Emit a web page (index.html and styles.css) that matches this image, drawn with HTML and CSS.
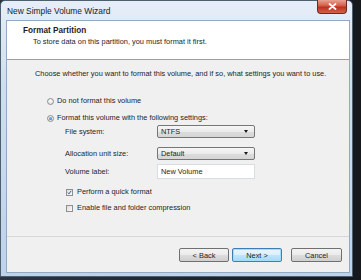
FILE: index.html
```html
<!DOCTYPE html>
<html>
<head>
<meta charset="utf-8">
<link rel="stylesheet" href="styles.css">
</head>
<body>
<div class="window">
  <div class="titlebar">
    <span class="title">New Simple Volume Wizard</span>
    <div class="close"><svg width="9" height="7" viewBox="0 0 9 7"><path d="M1.5 1 L7.5 6 M7.5 1 L1.5 6" stroke="#fff" stroke-width="1.8" stroke-linecap="round"/></svg></div>
  </div>
  <div class="client">
    <div class="header">
      <div class="h-title">Format Partition</div>
      <div class="h-sub">To store data on this partition, you must format it first.</div>
    </div>
    <div class="main">
      <div class="intro">Choose whether you want to format this volume, and if so, what settings you want to use.</div>
      <div class="radio-row r1"><span class="radio"></span>Do not format this volume</div>
      <div class="radio-row r2"><span class="radio checked"></span>Format this volume with the following settings:</div>
      <div class="field f-fs"><span class="label">File system:</span><div class="select">NTFS<span class="arrow"></span></div></div>
      <div class="field f-alloc"><span class="label">Allocation unit size:</span><div class="select">Default<span class="arrow"></span></div></div>
      <div class="field f-vol"><span class="label">Volume label:</span><div class="input">New Volume</div></div>
      <div class="check-row c1"><span class="check checked"><svg width="7" height="7" viewBox="0 0 7 7"><path d="M1.2 3.6 L2.8 5.4 L5.8 1.2" fill="none" stroke="#2a3f7a" stroke-width="1.2"/></svg></span>Perform a quick format</div>
      <div class="check-row c2"><span class="check"></span>Enable file and folder compression</div>
    </div>
    <div class="footer">
      <div class="btn">&lt; Back</div>
      <div class="btn default">Next &gt;</div>
      <div class="btn cancel">Cancel</div>
    </div>
  </div>
</div>
</body>
</html>
```

FILE: styles.css
```css
html, body { margin: 0; padding: 0; }
body {
  width: 361px; height: 280px; overflow: hidden;
  background: linear-gradient(90deg, #2c3440 0%, #15181c 100%);
  font-family: "Liberation Sans", Arial, sans-serif;
  color: #1e1e1e;
}
.window {
  box-sizing: border-box;
  width: 353px; height: 277px;
  border: 1px solid #4f5f72;
  border-radius: 5px 5px 0 0;
  background: linear-gradient(180deg, #e6eef8 0%, #cfdff1 30%, #bcd3ec 100%);
  padding: 0 2px 3px 5px;
  display: flex; flex-direction: column;
}
.titlebar {
  height: 19px; flex: none;
  display: flex; align-items: flex-start; justify-content: space-between;
}
.title { font-size: 8.4px; margin: 5px 0 0 1px; color: #1a1a1a; }
.close {
  width: 30px; height: 14px; margin: -1px 3px 0 0;
  border: 1px solid #6e2a22; border-top: none;
  border-radius: 0 0 4px 4px;
  background: linear-gradient(180deg, #e8a293 0%, #d35b45 45%, #b9331e 55%, #d4624a 100%);
  box-sizing: border-box;
  display: flex; align-items: center; justify-content: center;
}
.client {
  flex: 1;
  border: 1px solid #93a9c1;
  background: #f0f0f0;
  display: flex; flex-direction: column;
}
.header {
  height: 38px; flex: none;
  background: #fff;
  border-bottom: 1px solid #a0a0a0;
  padding-left: 16px; box-sizing: content-box;
}
.h-title { font-weight: bold; font-size: 8.2px; line-height: 10px; margin-top: 5px; }
.h-sub { font-size: 7.4px; line-height: 10px; margin-top: 1px; padding-left: 10px; }
.main { flex: 1; font-size: 7.4px; line-height: 10px; }
.intro { margin: 9px 0 0 28px; white-space: nowrap; }
.radio-row, .check-row { display: flex; align-items: center; height: 10px; }
.r1 { margin: 17px 0 0 40px; }
.r2 { margin: 7px 0 0 40px; }
.radio {
  width: 7px; height: 7px; border-radius: 50%;
  border: 1px solid #8f8f8f; box-sizing: border-box;
  background: radial-gradient(circle at 50% 40%, #ffffff, #d4d4d4);
  margin-right: 3px; position: relative;
}
.radio.checked::after {
  content: ""; position: absolute; left: 1px; top: 1px; width: 3px; height: 3px; border-radius: 50%;
  background: radial-gradient(circle at 40% 40%, #7bc0ef, #1f5f9e);
}
.field { display: flex; align-items: center; margin-left: 58px; }
.label { width: 92px; flex: none; }
.f-fs { margin-top: 2px; height: 13px; }
.f-alloc { margin-top: 9px; height: 13px; }
.f-vol { margin-top: 4px; height: 15px; }
.select {
  box-sizing: border-box; width: 98px; height: 13px;
  border: 1px solid #767676; border-radius: 2px;
  background: linear-gradient(180deg, #f6f6f6 0%, #ebebeb 50%, #dcdcdc 51%, #d6d6d6 100%);
  padding-left: 3px; line-height: 11px; position: relative;
}
.arrow {
  position: absolute; right: 6px; top: 4px;
  border-left: 2.5px solid transparent; border-right: 2.5px solid transparent;
  border-top: 3px solid #1a1a1a;
}
.input {
  box-sizing: border-box; width: 98px; height: 15px;
  border: 1px solid #d8dde3; background: #fff;
  padding-left: 3px; line-height: 13px;
}
.check {
  width: 7px; height: 7px; box-sizing: border-box;
  border: 1px solid #8f8f8f;
  background: linear-gradient(135deg, #dcdcdc, #fbfbfb);
  margin-right: 4px; display: flex; align-items: center; justify-content: center;
}
.check svg { display: block; }
.c1 { margin: 8px 0 0 59px; }
.c2 { margin: 6px 0 0 59px; }
.footer {
  height: 36px; flex: none; box-sizing: border-box;
  border-top: 1px solid #d6d6d6;
  padding: 11px 7px 0 0;
  display: flex; justify-content: flex-end; align-items: flex-start;
  font-size: 7.4px;
}
.btn {
  box-sizing: border-box; width: 50px; height: 14px;
  border: 1px solid #707070; border-radius: 2px;
  background: linear-gradient(180deg, #f3f3f3 0%, #ebebeb 50%, #dddddd 51%, #cfcfcf 100%);
  display: flex; align-items: center; justify-content: center;
  margin-left: 3px;
}
.btn.default { border-color: #3c7fb1; box-shadow: inset 0 0 0 1px #9ee0f8; background: linear-gradient(180deg, #eaf6fd 0%, #d9f0fc 50%, #bee6fd 51%, #a7d9f5 100%); }
.btn.cancel { width: 51px; margin-left: 9px; }
```
